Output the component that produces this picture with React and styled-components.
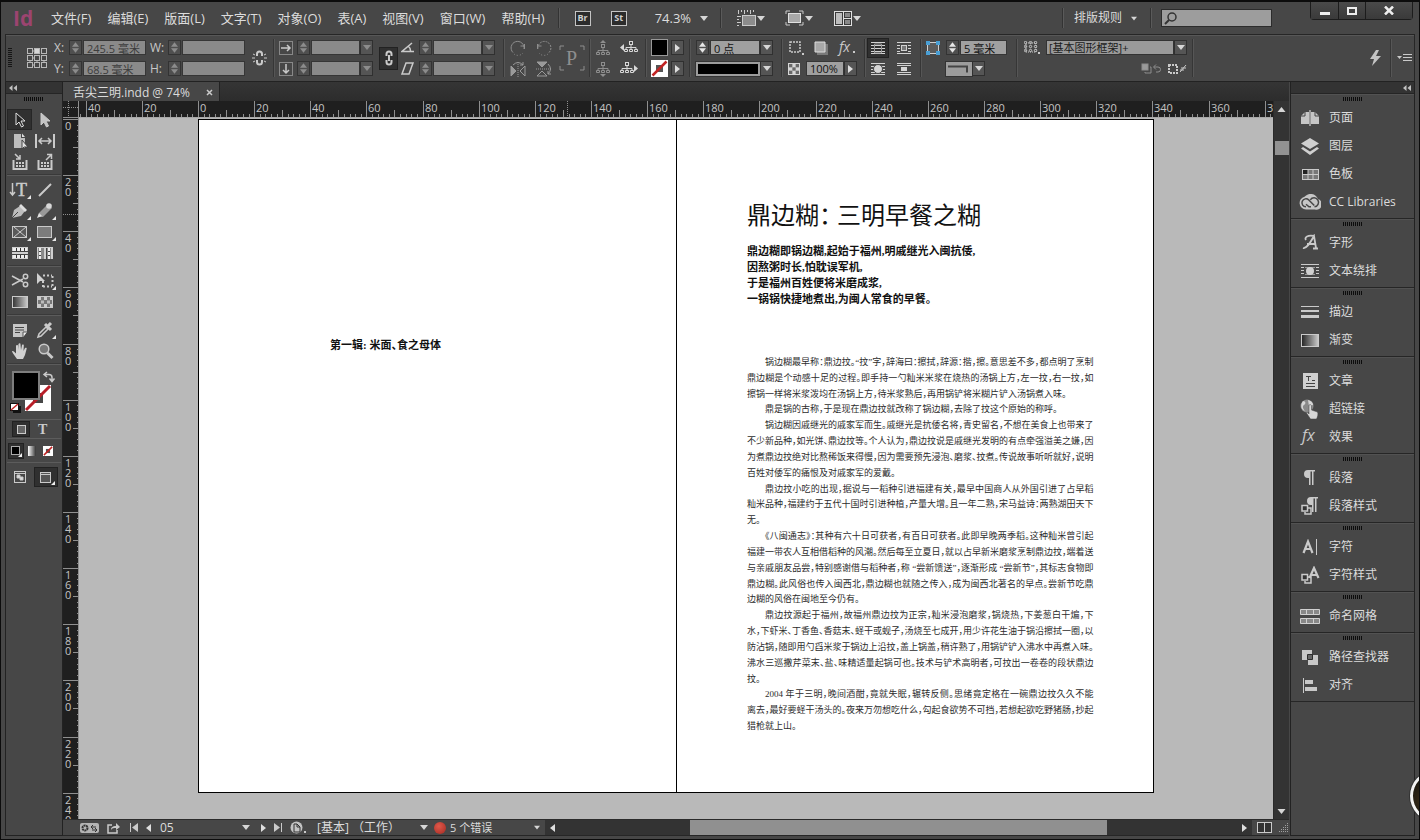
import React, { useState } from 'react'
import styled, { createGlobalStyle } from 'styled-components'

const GlobalStyle = createGlobalStyle`
  * {
    box-sizing: border-box;
  }
  body {
    margin: 0;
    background: #111;
  }
  button, input, select {
    font: inherit;
    color: inherit;
    margin: 0;
    padding: 0;
    border: 0;
    border-radius: 0;
    background: none;
    outline: none;
  }
  svg {
    display: block;
    flex: none;
  }
  h1, p {
    margin: 0;
  }
`;

/* ---------- window ---------- */

const Frame = styled.div`
  position: relative;
  display: flex;
  flex-direction: column;
  height: 100vh;
  overflow: hidden;
  padding: 0 4px 3px;
  background: #474747;
  border: 1px solid #0c0c0c;
  border-top-width: 2px;
  color: #dcdcdc;
  font-family: "Open Sans", "Noto Sans CJK SC", sans-serif;
  font-size: 12px;
  line-height: 16px;
`;

const MenuBar = styled.header`
  display: flex;
  align-items: center;
  height: 32px;
  flex: none;
  padding-left: 8px;
`;

const Logo = styled.div`
  width: 38px;
  color: #9c4470;
  font-size: 21px;
  font-weight: 700;
`;

const MenuList = styled.nav`
  display: flex;
  gap: 16px;
  font-size: 13px;
`;

const PlainButton = styled.button`
  display: flex;
  align-items: center;
  gap: ${(p) => p.$gap || 0}px;
  margin-left: ${(p) => p.$ml || 0}px;
  white-space: nowrap;
`;

const BarDivider = styled.span`
  width: 2px;
  height: 20px;
  margin-left: ${(p) => p.$ml || 0}px;
  border-left: 1px solid #333;
  border-right: 1px solid #5a5a5a;
`;

const AppBadge = styled.button`
  width: 16px;
  height: 15px;
  margin-left: ${(p) => p.$ml}px;
  border: 1px solid #c4c4c4;
  background: #2c2c2c;
  color: #cfcfcf;
  font-size: 9px;
  font-weight: 700;
  line-height: 12px;
`;

const Zoom = styled.button`
  display: flex;
  align-items: center;
  gap: 9px;
  margin-left: 28px;
  font-size: 13px;
`;

const Spacer = styled.div`
  flex: 1;
`;

const SearchBox = styled.label`
  display: flex;
  align-items: center;
  width: 111px;
  height: 18px;
  margin-left: 9px;
  padding-left: 2px;
  background: #9d9d9d;
  border: 1px solid #2c2c2c;

  input {
    width: 90px;
    color: #111;
  }
`;

const WindowButtons = styled.div`
  display: flex;
  align-self: flex-start;
  height: 18px;
  margin: 0 2px 0 38px;
  border: 1px solid #1c1c1c;
  border-top: 0;
  border-radius: 0 0 4px 4px;
`;

const WindowButton = styled.button`
  display: flex;
  align-items: center;
  justify-content: center;
  width: ${(p) => p.$w}px;
  background: linear-gradient(#4a4a4a, #3a3a3a);

  & + & {
    border-left: 1px solid #1c1c1c;
  }
`;

/* ---------- control bar ---------- */

const ControlBar = styled.section`
  display: flex;
  align-items: center;
  height: 48px;
  flex: none;
  border: 1px solid #262626;
  border-bottom-color: #222;
  box-shadow: inset 0 1px 0 #575757;
`;

const Cluster = styled.div`
  display: flex;
  flex-direction: column;
  gap: 6px;
  flex: none;
  margin-left: ${(p) => p.$ml}px;
`;

const Line2 = styled.div`
  display: flex;
  align-items: center;
  justify-content: ${(p) => p.$justify || 'flex-start'};
  gap: ${(p) => p.$gap || 0}px;
  height: 15px;
  padding-left: ${(p) => p.$indent || 0}px;
`;

const Single = styled.div`
  flex: none;
  margin-left: ${(p) => p.$ml}px;
`;

const Divider = styled.span`
  flex: none;
  width: 2px;
  height: 38px;
  margin-left: ${(p) => p.$ml}px;
  border-left: 1px solid #363636;
  border-right: 1px solid #565656;
`;

const FieldLabel = styled.label`
  width: ${(p) => p.$w}px;
  color: #c8c8c8;
`;

const SpinBox = styled.span`
  display: flex;
  flex-direction: column;
  width: 13px;
  height: 15px;
  margin-right: 1px;
  border: 1px solid #333;
  background: #4f4f4f;

  button {
    display: flex;
    align-items: center;
    justify-content: center;
    flex: 1;
  }
`;

const Field = styled.input`
  width: ${(p) => p.$w}px;
  height: 15px;
  padding-left: 3px;
  border: 1px solid #363636;
  background: ${(p) => (p.$on ? '#a0a0a0' : '#8a8a8a')};
  color: ${(p) => (p.$on ? '#111' : '#3c3c3c')};
  font-size: 11px;
  line-height: 13px;
`;

const DropButton = styled.button`
  display: flex;
  align-items: center;
  justify-content: center;
  width: 13px;
  height: 15px;
  border: 1px solid #303030;
  background: #555;
`;

const StrokeBox = styled.span`
  display: flex;
  align-items: center;
  justify-content: center;
  width: ${(p) => p.$w}px;
  height: 14px;
  border: 2px solid #9c9c9c;
  outline: 1px solid #333;
  background: ${(p) => p.$bg};
`;

const Pressable = styled.button`
  display: flex;
  align-items: center;
  justify-content: center;
  flex: none;
  width: ${(p) => p.$w}px;
  height: ${(p) => p.$h}px;
  border: 1px solid ${(p) => (p.$on ? '#222' : 'transparent')};
  background: ${(p) => (p.$on ? '#303030' : 'transparent')};
`;

const StyleSelect = styled.span`
  display: flex;
  height: 15px;

  select {
    appearance: none;
    width: 128px;
    padding-left: 2px;
    border: 1px solid #333;
    background: #9a9a9a;
    color: #1c1c1c;
    font-size: 11px;
    line-height: 13px;
  }
`;

/* ---------- work area ---------- */

const Body = styled.div`
  display: flex;
  flex: 1;
  min-height: 0;
`;

const Toolbox = styled.aside`
  width: 58px;
  flex: none;
  border: 1px solid #222;
  border-top: 0;
`;

const DockHeader = styled.div`
  display: flex;
  align-items: center;
  justify-content: ${(p) => p.$side};
  height: 12px;
  padding: 0 3px;
  background: #333;
  border-bottom: 1px solid #252525;
`;

const GripBar = styled.div`
  width: 20px;
  height: 4px;
  margin: 0 auto;
  background: repeating-linear-gradient(90deg, #0c0c0c 0 1px, #474747 1px 2px);
`;

const ToolGrip = styled.div`
  height: 12px;
  padding-top: 3px;
`;

const ToolGroup = styled.div`
  display: grid;
  grid-template-columns: 25px 25px;
  grid-auto-rows: 21px;
  padding: 3px 0;
  margin: 0 1px;
  border-bottom: 1px solid #5c5c5c;
  box-shadow: inset 0 -1px 0 #3a3a3a;
`;

const Tool = styled.button`
  display: flex;
  align-items: center;
  justify-content: center;
  border: 1px solid ${(p) => (p.$on ? '#262626' : 'transparent')};
  background: ${(p) => (p.$on ? '#303030' : 'transparent')};
`;

const Swatches = styled.div`
  height: 55px;
  padding: 6px 1px 0;
  margin: 0 1px;
  border-bottom: 1px solid #5c5c5c;
`;

const SmallRow = styled.div`
  display: flex;
  align-items: center;
  gap: ${(p) => p.$gap}px;
  height: ${(p) => p.$h}px;
  padding-left: ${(p) => p.$indent}px;
  margin: 0 1px;
  border-bottom: 1px solid ${(p) => (p.$last ? 'transparent' : '#5c5c5c')};
`;

const Main = styled.main`
  display: flex;
  flex-direction: column;
  flex: 1;
  min-width: 0;
`;

const TabStrip = styled.div`
  display: flex;
  height: 19px;
  flex: none;
  background: linear-gradient(#353535, #2c2c2c);
`;

const Tab = styled.div`
  display: flex;
  align-items: center;
  gap: 16px;
  height: 19px;
  padding: 2px 6px 0 10px;
  background: #474747;
  border-right: 1px solid #222;
`;

const TopRuler = styled.div`
  display: flex;
  height: 17px;
  flex: none;
  background: #1f1f1f;
`;

const RulerTrack = styled.div`
  display: flex;
  flex: 1;
  justify-content: center;
  overflow: hidden;
  border-bottom: 1px solid #a8a8a8;
`;

const RulerSvg = styled.svg`
  fill: #c4c4c4;
  font-size: 11px;
  line {
    stroke: #8f8f8f;
    shape-rendering: crispEdges;
  }
`;

const Stage = styled.div`
  display: flex;
  flex: 1;
  min-height: 0;
`;

const SideRuler = styled.div`
  width: 16px;
  flex: none;
  overflow: hidden;
  background: #1f1f1f;
`;

const Pasteboard = styled.div`
  display: flex;
  justify-content: center;
  align-items: flex-start;
  flex: 1;
  overflow: hidden;
  padding-top: 1px;
  background: #b9b9b9;
`;

const Spread = styled.article`
  display: grid;
  grid-template-columns: 478px 476px;
  height: 674px;
  border: 1px solid #000;
  background: #fff;
  color: #111;
  font-family: "Liberation Serif", "Noto Sans CJK SC", serif;
  font-feature-settings: "halt";
`;

const LeftPage = styled.section`
  padding: 217px 0 0 131px;
  border-right: 1px solid #000;
  font-size: 11px;
  font-weight: 700;
`;

const RightPage = styled.section`
  padding: 80px 61px 0 70px;
`;

const Title = styled.h1`
  font-size: 24px;
  font-weight: 400;
  line-height: 32px;
`;

const Lead = styled.div`
  margin-top: 11px;
  font-size: 11px;
  font-weight: 700;
  line-height: 16px;
`;

const Story = styled.div`
  display: grid;
  grid-auto-rows: 1fr;
  height: 380px;
  margin-top: 48px;
  color: #2c2c2c;
  font-size: 9px;
  line-height: 15px;
`;

const StoryLine = styled.p`
  white-space: nowrap;
  padding-left: ${(p) => (p.$indent ? 18 : 0)}px;
  text-align: justify;
  text-align-last: ${(p) => (p.$end ? 'left' : 'justify')};
`;

const VScroll = styled.div`
  display: flex;
  flex-direction: column;
  align-items: center;
  width: 16px;
  margin-top: -17px;
  padding: 6px 0 5px;
  background: #333;
  border-left: 1px solid #2a2a2a;
`;

const VThumb = styled.div`
  width: 14px;
  height: 14px;
  margin: 29px 0 auto;
  background: #929292;
`;

const StatusBar = styled.footer`
  display: flex;
  align-items: center;
  height: 17px;
  flex: none;
  border-top: 1px solid #2b2b2b;
  border-bottom: 1px solid #262626;
`;

const StatusItems = styled.div`
  display: flex;
  align-items: center;
  width: 482px;
  height: 15px;
  flex: none;
  padding-left: 17px;
`;

const StatusCell = styled.div`
  display: flex;
  align-items: center;
  justify-content: space-between;
  width: ${(p) => p.$w}px;
  margin-left: ${(p) => p.$ml}px;
  white-space: nowrap;
  font-size: ${(p) => (p.$small ? 11 : 12)}px;

  input {
    width: 50px;
  }
`;

const ErrorDot = styled.span`
  width: 12px;
  height: 12px;
  margin: 0 4px 0 6px;
  border-radius: 50%;
  background: radial-gradient(circle at 40% 35%, #e0584a, #a32a22);
`;

const HScroll = styled.div`
  display: flex;
  align-items: center;
  flex: 1;
  height: 15px;
  padding: 0 5px;
  background: #333;
`;

const HTrack = styled.div`
  display: grid;
  grid-template-columns: 20fr 62fr 20fr;
  flex: 1;
  height: 15px;
`;

const HThumb = styled.div`
  grid-column: 2;
  background: #909090;
`;

const StatusEnd = styled.div`
  display: flex;
  align-items: center;
  gap: 6px;
  padding: 0 1px 0 5px;
`;

/* ---------- panels ---------- */

const Dock = styled.aside`
  width: 125px;
  flex: none;
  margin-left: 1px;
  border: 1px solid #222;
  border-top: 0;
`;

const PanelGroup = styled.div`
  padding: 3px 0 2px;
  border-bottom: 1px solid #262626;
  box-shadow: inset 0 1px 0 #525252;
`;

const PanelButton = styled.button`
  display: flex;
  align-items: center;
  width: 100%;
  height: 28px;
  padding-left: 8px;
  gap: 8px;

  ${GripBar} + & {
    margin-top: 3px;
  }
`;

const PanelIcon = styled.span`
  display: flex;
  align-items: center;
  justify-content: center;
  width: 22px;
`;

const FloatBall = styled.div`
  position: absolute;
  right: -39px;
  bottom: 18px;
  width: 48px;
  height: 50px;
  border: 3px solid #f2f2f2;
  border-radius: 50%;
  background: radial-gradient(circle at 30% 60%, #3a2c18, #14140f 60%);
  box-shadow: 0 0 0 1px #333;
`;

/* ---------- drawings ---------- */

const C = '#cacaca';

const Icon = ({ w = 16, h = 16, children, ...rest }) => (
  <svg width={w} height={h} viewBox={`0 0 ${w} ${h}`} fill="none" stroke={C} aria-hidden="true" {...rest}>
    {children}
  </svg>
);

const Down = ({ w = 8, color = '#d6d6d6' }) => (
  <svg width={w} height={5} viewBox="0 0 8 5" aria-hidden="true"><path d="M0 0h8L4 5z" fill={color} /></svg>
);
const Up = ({ w = 8, color = '#d6d6d6' }) => (
  <svg width={w} height={5} viewBox="0 0 8 5" aria-hidden="true"><path d="M0 5h8L4 0z" fill={color} /></svg>
);
const Right = () => (
  <svg width={5} height={8} viewBox="0 0 5 8" aria-hidden="true"><path d="M0 0v8l5-4z" fill="#dedede" /></svg>
);
const Left = () => (
  <svg width={5} height={8} viewBox="0 0 5 8" aria-hidden="true"><path d="M5 0v8L0 4z" fill="#dedede" /></svg>
);
const Chevrons = () => (
  <svg width={8} height={6} viewBox="0 0 8 6" aria-hidden="true"><path d="M3.5 0v6L0 3zM8 0v6L4.5 3z" fill="#c0c0c0" /></svg>
);

const WindowLayoutIcon = () => (
  <Icon w={19} h={16}>
    <path d="M1.5 0v4M4.500 0v2M7.500 0v4M10.500 0v2M13.500 0v4M16.500 0v2M0 6.500h4M0 9.500h2M0 12.500h4M0 15.500h2" />
    <rect x="5.500" y="5.500" width="13" height="10" fill="#8c8c8c" />
  </Icon>
);
const ScreenModeIcon = () => (
  <Icon w={19} h={16}>
    <path d="M1 4V1h4M14 1h4v3M18 12v3h-4M5 15H1v-3" />
    <rect x="3.5" y="3.5" width="12" height="9" fill="#a8a8a8" stroke="#e0e0e0" />
  </Icon>
);
const ArrangeIcon = () => (
  <Icon w={18} h={15} stroke="#e0e0e0">
    <rect x=".5" y=".5" width="17" height="14" fill="#3a3a3a" />
    <rect x="2" y="2" width="6" height="11" fill="#bdbdbd" stroke="none" />
    <path d="M9.500 1v13M10 7.500h7" />
    <path d="M11 2h5v4h-5zM11 9h5v4h-5z" fill="#888" stroke="none" />
  </Icon>
);

const RefPointIcon = () => (
  <Icon w={20} h={21} stroke="#b8b8b8">
    <path d="M2 3h16M2 10h16M2 17h16M3 3v14M10 3v14M17 3v14" strokeDasharray="1 1" />
    {[0, 7, 14].map((y) => [0, 7, 14].map((x) => (
      <rect key={`${x}${y}`} x={x + .5} y={y + .5} width="5" height="5" fill={x === 7 && y === 0 ? '#d6d6d6' : '#474747'} />
    )))}
  </Icon>
);
const BrokenLinkIcon = () => (
  <Icon w={15} h={16}>
    <path d="M5 6V4a2.5 2.5 0 0 1 5 0v2M5 10v2a2.5 2.5 0 0 0 5 0v-2" strokeWidth="2" />
    <path d="M0 8h3M12 8h3M1 4l2 1M14 4l-2 1M1 12l2-1M14 12l-2-1" />
  </Icon>
);
const ScaleXIcon = () => (
  <Icon w={14} h={14}>
    <rect x=".5" y=".5" width="13" height="13" strokeDasharray="1 1" />
    <path d="M2 7h9M8 4l3 3-3 3" strokeWidth="1.5" />
  </Icon>
);
const ScaleYIcon = () => (
  <Icon w={14} h={14}>
    <rect x=".5" y=".5" width="13" height="13" strokeDasharray="1 1" />
    <path d="M7 2v9M4 8l3 3 3-3" strokeWidth="1.5" />
  </Icon>
);
const ChainIcon = () => (
  <Icon w={10} h={16}>
    <path d="M2.5 6V4a2.5 2.5 0 0 1 5 0v2M2.5 10v2a2.5 2.5 0 0 0 5 0v-2M5 5v6" strokeWidth="2" />
  </Icon>
);
const AngleIcon = () => <Icon w={14} h={11}><path d="M11 1L1 9.5h12M7 4a6 6 0 0 1 2.5 5" strokeWidth="1.5" /></Icon>;
const ShearIcon = () => <Icon w={14} h={13}><path d="M5 1h7L8 12H1z" strokeWidth="1.5" /></Icon>;

const RotateIcon = ({ flip }) => (
  <Icon stroke="#8e8e8e">
    <g transform={flip ? 'translate(16 0) scale(-1 1)' : undefined}>
      <path d="M3 12.5A6.5 6.5 0 1 1 14 9" strokeDasharray={flip ? '2 1' : undefined} />
      <path d="M14.5 9v-5M14.5 6h-4" />
      <path d="M4 14a6.5 6.5 0 0 0 9-1" strokeDasharray="1 2" />
    </g>
  </Icon>
);
const FlipIcon = ({ turn }) => (
  <Icon stroke="#9a9a9a">
    <g transform={turn ? 'rotate(90 8 8)' : undefined}>
      <path d="M8 1v15" strokeDasharray="1 1" />
      <path d="M1 5l5 5-5 5z" fill="#9a9a9a" />
      <path d="M15 5l-5 5 5 5z" />
      <path d="M3 4q5-5 10 0M13 1v3h-3" />
    </g>
  </Icon>
);
const BigPIcon = () => (
  <Icon w={26} h={26} stroke="#8e8e8e">
    <path d="M1 5V1h4M21 1h4v4M25 21v4h-4M5 25H1v-4" />
    <text x="7" y="20" fontSize="20" fontFamily="Liberation Serif" fill="#8e8e8e" stroke="none">P</text>
  </Icon>
);
const TreeIcon = ({ dir, bright }) => {
  const c = bright ? '#d8d8d8' : '#8e8e8e';
  const arrows = {
    up: 'M4 3h6L7 0z',
    down: 'M4 13h6l-3 3z',
    left: 'M4 4v7L0 7.5z',
    right: 'M14 4v7l4-3.5z',
  };
  const dx = dir === 'left' ? 4 : 0;
  const dy = dir === 'up' ? 3 : 0;
  return (
    <Icon w={bright ? 18 : 14} h={16} stroke={c}>
      <path d={arrows[dir]} fill={c} stroke="none" />
      <g transform={`translate(${dx} ${dy})`}>
        <rect x="5.5" y="1.5" width="3" height="3" />
        <path d="M7 5v4M2 9V7.5h10V9" />
        <path d="M.5 9.5h3v2h-3zM5.5 9.5h3v2h-3zM10.5 9.5h3v2h-3z" />
      </g>
    </Icon>
  );
};
const NoneSwatch = ({ s = 17 }) => (
  <svg width={s} height={s} viewBox="0 0 17 17" aria-hidden="true">
    <rect width="17" height="17" fill="#fff" />
    <rect x="5" y="5" width="7" height="7" fill="#555" />
    <path d="M1.5 15.5l14-14" stroke="#c22424" strokeWidth="2.5" />
  </svg>
);
const BlackSwatch = () => (
  <svg width={17} height={17} aria-hidden="true"><rect x=".5" y=".5" width="16" height="16" fill="#000" stroke="#999" /></svg>
);
const DashedBoxIcon = () => (
  <Icon><rect x="2" y="2" width="10" height="10" strokeDasharray="2 1" strokeWidth="1.5" /><path d="M14 13h2v2h-2z" fill={C} stroke="none" /></Icon>
);
const ShadowIcon = () => (
  <Icon w={14} h={14} stroke="none"><path d="M3 3h11v11H3z" fill="#7a7a7a" /><path d="M1 1h10v10H1z" fill="#a8a8a8" stroke="#ddd" /></Icon>
);
const FxIcon = ({ size = 14, dot }) => (
  <Icon w={20} h={24}>
    <text x="2" y="16" fontSize={size} fontStyle="italic" fill={C} stroke="none">fx</text>
    {dot && <path d="M16 15h2v2h-2z" fill={C} stroke="none" />}
  </Icon>
);
const CheckerIcon = ({ w = 12, h = 12 }) => (
  <Icon w={w} h={h} stroke="none">
    <rect width={w} height={h} fill="#d6d6d6" />
    {[0, 1, 2].map((r) => [0, 1, 2].map((c) => ((r + c) % 2 === 0 ? <rect key={`${r}${c}`} x={1 + c * (w - 2) / 3} y={1 + r * (h - 2) / 3} width={(w - 2) / 3} height={(h - 2) / 3} fill="#6a6a6a" /> : null)))}
  </Icon>
);
const WrapIcon = ({ kind }) => (
  <Icon w={16} h={14} stroke="#d2d2d2">
    <path d="M1 1.5h14M1 12.5h14" />
    <path d={kind === 'jump' ? 'M1 3.5h14M1 10.5h14' : 'M1 4.5h14M1 7.500h14M1 10.500h14'} />
    {kind === 'box' && <rect x="4.5" y="3.5" width="7" height="7" fill="#8c8c8c" stroke="#474747" />}
    {kind === 'box' && <rect x="5.5" y="4.5" width="5" height="5" fill="#777" />}
    {kind === 'shape' && <circle cx="8" cy="7" r="4.5" fill="#d6d6d6" stroke="#474747" />}
    {kind === 'jump' && <rect x="5" y="5" width="6" height="4" fill="#d6d6d6" stroke="none" />}
    {kind === 'none' && <path d="M4.500 3v9h7V3z" stroke="#999" />}
  </Icon>
);
const CornerIcon = () => (
  <Icon w={16} h={16}>
    <rect x="2.500" y="2.500" width="11" height="11" fill="#5c5c5c" stroke="#d0d0d0" />
    <path d="M1 1h4v4H1zM11 1h4v4h-4zM1 11h4v4H1zM11 11h4v4h-4z" fill="#4a9fd4" stroke="none" />
  </Icon>
);
const FrameStyleIcon = () => (
  <Icon w={16} h={14}>
    <path d="M2 2h10v9H2z" strokeDasharray="1 1" />
    {[1, 5, 9].map((y) => [1, 6, 11].map((x) => <circle key={`${x}${y}`} cx={x + .5} cy={y + .5} r="1.2" />))}
    <path d="M14 11h2v2h-2z" fill={C} stroke="none" />
  </Icon>
);
const ClearIcon = () => (
  <Icon w={21} h={12} stroke="#8e8e8e">
    <rect x="1" y="1" width="6" height="6" fill="#9a9a9a" />
    <path d="M9 4h1v6H4V9M13 4h4a2.5 2.5 0 0 1 0 5h-2M15 1.5L12.5 4 15 6.5" />
  </Icon>
);
const RedefineIcon = () => (
  <Icon w={19} h={12}>
    <rect x="1" y="2" width="8" height="8" strokeDasharray="2 1" strokeWidth="2" />
    <path d="M12 9l6-7M13 5h5M12 7h4" />
  </Icon>
);
const BoltIcon = () => <Icon w={11} h={16} stroke="none"><path d="M6 0L0 9h4L2 16l9-10H6l3-6z" fill="#c4c4c4" /></Icon>;
const FlyoutIcon = () => (
  <Icon w={15} h={9}><path d="M0 2h5L2.5 5z" fill={C} stroke="none" /><path d="M6 .5h9M6 3.5h9M6 6.5h9" /></Icon>
);

/* toolbox icons sit on a 22x18 plate, the corner mark shows hidden tools */
const Plate = ({ more, children }) => (
  <Icon w={22} h={18}>
    {children}
    {more && <path d="M22 14v4h-4z" fill="#e8e8e8" stroke="none" />}
  </Icon>
);

const toolGroups = [
  [
    ['选择工具', <Plate><path d="M7 2v12l3-3 2.5 5 2-1-2.5-5h4z" fill="#262626" stroke="#e0e0e0" /></Plate>],
    ['直接选择工具', <Plate><path d="M7 2v12l3-3 2.5 5 2-1-2.5-5h4z" fill="#c4c4c4" /></Plate>],
    ['页面工具', <Plate><path d="M5 2h7v4h4v10H5z" fill="#bdbdbd" stroke="none" /><path d="M13 1.5V5h3z" fill="#e0e0e0" stroke="none" /><path d="M13 8v9l2-2h4z" fill="#e0e0e0" stroke="#444" /></Plate>],
    ['间隙工具', <Plate><path d="M2 2v14M20 2v14" strokeWidth="2" /><path d="M5 9h12M8 6L5 9l3 3M14 6l3 3-3 3" strokeWidth="1.5" /></Plate>],
    ['内容收集器', <Plate><path d="M4.5 7v9h13V7" strokeWidth="2" /><path d="M7 10h8M7 13h8" strokeWidth="2" strokeDasharray="2 1" /><path d="M6 1l5 5M11 2v4H7" strokeWidth="1.5" /></Plate>],
    ['内容置入器', <Plate><path d="M4.5 7v9h13V7" strokeWidth="2" /><path d="M7 10h8M7 13h8" strokeWidth="2" strokeDasharray="2 1" /><path d="M12 7l5-5M13 1.5h4.5V6" strokeWidth="1.5" /></Plate>],
  ],
  [
    ['直排文字工具', <Plate more><path d="M3.5 2v12M1 11l2.5 3L6 11" strokeWidth="1.5" /><text x="7" y="15" fontSize="18" fontFamily="Liberation Serif" fill={C} stroke={C} strokeWidth=".5">T</text></Plate>],
    ['直线工具', <Plate><path d="M5 15L17 3" strokeWidth="2" /></Plate>],
    ['钢笔工具', <Plate more><path d="M3 16l2-8 6-4 5 5-4 5z" fill="#bdbdbd" stroke="none" /><path d="M12 2l6 6-2 2-6-6z" fill="#dedede" stroke="none" /><path d="M3 16l6-6" stroke="#444" /></Plate>],
    ['铅笔工具', <Plate more><path d="M4 15l1-4 9-9 4 4-9 9z" fill="#999" stroke="none" /><path d="M3 16l2-5 3 3z" fill="#e0e0e0" stroke="none" /><circle cx="15" cy="4" r="2.8" fill="#d8d8d8" stroke="none" /></Plate>],
    ['矩形框架工具', <Plate more><rect x="3.500" y="3.500" width="14" height="11" fill="#5a5a5a" /><path d="M5 4l12 10M17 4L5 14" /></Plate>],
    ['矩形工具', <Plate more><rect x="3.500" y="3.500" width="14" height="11" fill="#7c7c7c" /></Plate>],
    ['水平网格工具', <Plate><rect x="3" y="3" width="16" height="12" fill="#d0d0d0" stroke="none" /><path d="M4 5.5h14M4 12.5h14" stroke="#333" strokeWidth="3" /><path d="M4 5.5h14M4 12.5h14" stroke="#eee" strokeWidth="3" strokeDasharray="3 1" /><path d="M3 7.5h16M3 10.5h16" stroke="#444" /></Plate>],
    ['垂直网格工具', <Plate><rect x="3" y="3" width="16" height="12" fill="#d0d0d0" stroke="none" /><path d="M6 4v11M15 4v11" stroke="#444" strokeWidth="3" /><path d="M6 4v11M15 4v11" stroke="#eee" strokeWidth="2" strokeDasharray="3 1" /><path d="M9 4v11M12.5 4v11" stroke="#444" /></Plate>],
  ],
  [
    ['剪刀工具', <Plate><path d="M3 4l11 6M3 13l11-6" strokeWidth="1.5" /><circle cx="16.5" cy="4.5" r="2.2" strokeWidth="1.5" /><circle cx="16.5" cy="12.5" r="2.2" strokeWidth="1.5" /></Plate>],
    ['自由变换工具', <Plate more><path d="M9 3.5h9M9 14.5h9M18.5 4v10M9 9v6" strokeDasharray="2 2" strokeWidth="2" /><path d="M3 1v11l3-3h5z" fill="#d0d0d0" stroke="none" /></Plate>],
    ['渐变色板工具', <Plate><defs><linearGradient id="tg"><stop stopColor="#333" /><stop offset="1" stopColor="#ccc" /></linearGradient></defs><rect x="3.5" y="3.5" width="15" height="11" fill="url(#tg)" /></Plate>],
    ['渐变羽化工具', <Plate><rect x="3.5" y="3.5" width="15" height="11" fill="#777" /><path d="M4 5.5h14M4 12.5h14" stroke="#ccc" strokeWidth="3" strokeDasharray="3 3" /><path d="M7 9h12" stroke="#bbb" strokeWidth="3" strokeDasharray="3 3" /></Plate>],
  ],
  [
    ['附注工具', <Plate><path d="M4 3h14v8l-4 5H4z" fill="#c6c6c6" stroke="none" /><path d="M6 6.5h9M6 9h9M6 11.5h5" stroke="#444" /><path d="M14 16v-5h4" fill="#eee" stroke="#555" /></Plate>],
    ['吸管工具', <Plate more><path d="M4 16l1-3 7-7 2 2-7 7z" strokeWidth="1.5" /><path d="M11 3l6 6M14 5l3-3" strokeWidth="3" /></Plate>],
    ['抓手工具', <Plate><path d="M8 17C6 14 4 12 3 9.5c1-1 2 0 4 2V3.5c1-1 2-.5 2 .5V8l.5-6c1-1.2 2-.5 2 .3L12 8l1-5c1-1 2-.3 1.8.7L14.5 9l1.5-3c1.2-.7 2 0 1.6 1L16 13l-2 4z" fill="#d0d0d0" stroke="none" /></Plate>],
    ['缩放工具', <Plate><circle cx="10" cy="7" r="4.8" fill="#777" strokeWidth="1.5" /><path d="M13.5 11l5 5" strokeWidth="3" /></Plate>],
  ],
];

const SwatchDrawing = () => (
  <Icon w={50} h={44} stroke="none">
    <rect x="17" y="14" width="26" height="26" fill="#fff" />
    <rect x="25" y="22" width="10" height="10" fill="#474747" />
    <path d="M18 39L42 15" stroke="#b81e28" strokeWidth="3" />
    <rect x="5" y="1" width="26" height="27" fill="#000" stroke="#7e7e7e" strokeWidth="2" />
    <path d="M37 3.5h4a3 3 0 0 1 3 3V9M39 1l-3 2.5L39 6M41.5 7.5l2.5 3 2.5-3" stroke={C} strokeWidth="1.5" />
    <rect x="6" y="36" width="6" height="5" fill="none" stroke="#111" strokeWidth="2" />
    <rect x="2.5" y="32.5" width="8" height="7" fill="#fff" stroke="#111" />
    <path d="M3 39l7-6" stroke="#c22424" strokeWidth="1.5" />
  </Icon>
);

const LayerIcon = () => (
  <Icon w={18} h={17} stroke="none">
    <path d="M9 0l9 5.5L9 11 0 5.5z" fill="#d0d0d0" /><path d="M2 9l7 4.5L16 9l2 1.5L9 17 0 10.5z" fill="#d0d0d0" />
  </Icon>
);
const PagesIcon = () => (
  <Icon w={18} h={16} stroke="none">
    <path d="M0 6l4-4h4v12H0zM18 6l-4-4h-4v12h8z" fill="#c6c6c6" /><path d="M0 6h4V2M18 6h-4V2" stroke="#444" /><path d="M9 0v16" stroke="#eee" />
  </Icon>
);
const SwatchPanelIcon = () => (
  <Icon w={17} h={13}>
    <rect x=".5" y="1.500" width="16" height="10" fill="#777" />
    <rect x="1" y="2" width="5" height="4" fill="#222" stroke="none" />
    <path d="M6 1v11M11 1v11M1 6.5h15" />
  </Icon>
);
const CcIcon = () => (
  <Icon w={22} h={16}>
    <path d="M7 15.500a6.500 6.500 0 0 1-1.500-12.800A8 8 0 0 1 19 5a5.400 5.400 0 0 1-3 10.500z" fill="#c6c6c6" stroke="none" />
    <path d="M7 12.800a4 4 0 1 1 2.800-6.800l5.500 5.500" stroke="#474747" strokeWidth="1.500" />
    <path d="M15.500 12.800a4.500 4.500 0 1 0-4.200-7M7 10.200l3 2.600h2" stroke="#474747" strokeWidth="1.500" />
  </Icon>
);
const GlyphIcon = () => (
  <Icon w={18} h={18}><path d="M2 14c3 1 6-3 11-12l2 12M6 10h8M5 6C3 3 7 1 13 2M12 14.5h5" strokeWidth="1.8" /></Icon>
);
const WrapPanelIcon = () => (
  <Icon w={18} h={16}>
    <path d="M0 1.5h18M0 14.5h18M0 4.5h3M15 4.5h3M0 7.5h3M15 7.5h3M0 10.5h3M15 10.5h3" />
    <path d="M4 4.5h10M4 11.5h10" stroke="#999" /><circle cx="9" cy="8" r="4" fill="#d0d0d0" stroke="none" />
  </Icon>
);
const StrokeIcon = () => <Icon w={18} h={14}><path d="M0 1.5h18" /><path d="M0 6h18" strokeWidth="2" /><path d="M0 11.500h18" strokeWidth="3" /></Icon>;
const GradientIcon = () => (
  <Icon w={18} h={13}>
    <defs><linearGradient id="pg"><stop stopColor="#222" /><stop offset="1" stopColor="#ccc" /></linearGradient></defs>
    <rect x=".5" y=".5" width="17" height="12" fill="url(#pg)" />
  </Icon>
);
const ArticleIcon = () => (
  <Icon w={16} h={18} stroke="#444">
    <path d="M1 1h15v16H1z" fill="#d0d0d0" stroke="none" /><path d="M4 4.5h5M6.5 4v5M10 8.5h3M4 11.5h9M4 14.5h9" />
  </Icon>
);
const LinkIcon = () => (
  <Icon w={20} h={20} stroke="none">
    <circle cx="7" cy="7" r="6.5" fill="#8a8a8a" /><path d="M3 2c3 0 3 3 1 4s-1 4 1 6C1 11 0 6 3 2zM8 1c4 1 5 3 5 5l-4 1z" fill="#d6d6d6" />
    <path d="M9 6c1.5-1 2.5 0 2.5 1v4l6 2c1 2 0 5-1 7h-6l-4-6c1-1 2 0 2.5 1z" fill="#d6d6d6" stroke="#444" strokeWidth=".5" />
  </Icon>
);
const ParaShape = ({ x = 0, y = 0 }) => (
  <g transform={`translate(${x} ${y})`} stroke="none" fill={C}><path d="M8 0H5a4 4 0 0 0 0 8h1v7h1.5V1.5H9V15h1.5V1.5H12V0z" /></g>
);
const ParaIcon = () => <Icon w={14} h={16}><ParaShape /></Icon>;
const StyleSquares = ({ y }) => (
  <g transform={`translate(0 ${y})`}><path d="M7 3h3v6H4V7" strokeWidth="1.5" /><rect x="1" y=".5" width="5.5" height="5.5" strokeWidth="1.5" fill="#333" /></g>
);
const ParaStyleIcon = () => <Icon w={18} h={18}><ParaShape x={5} /><StyleSquares y={8} /></Icon>;
const CharIcon = () => (
  <Icon w={16} h={16}><path d="M1.5 14L6 2.5 10.5 14M3 10h6" strokeWidth="2.2" /><path d="M14.5 0v16" /></Icon>
);
const CharStyleIcon = () => <Icon w={19} h={18}><path d="M8.5 12L13 2l4.5 10M10 9h6" strokeWidth="2.2" /><StyleSquares y={8} /></Icon>;
const GridIcon = () => (
  <Icon w={20} h={17} stroke="#d0d0d0"><path d="M.5 1.500h19v5H.5zM6.500 1v6M13.500 1v6M.5 10.500h19v5H.5zM6.500 10v6M13.500 10v6" fill="#888" /></Icon>
);
const PathfinderIcon = () => (
  <Icon w={17} h={17} stroke="none">
    <path d="M0 1h10v10H0z" fill="#c8c8c8" /><path d="M6 6h10v10H6z" fill="#c8c8c8" /><path d="M5.5 5.5h5v5h-5z" fill="#666" stroke="#2c2c2c" />
  </Icon>
);
const AlignIcon = () => (
  <Icon w={15} h={15} stroke="none"><path d="M.5 0v15" stroke={C} /><path d="M2 2h8v4H2zM2 9h12v4H2z" fill="#c8c8c8" /></Icon>
);

/* ---------- data ---------- */

const menus = ['文件(F)', '编辑(E)', '版面(L)', '文字(T)', '对象(O)', '表(A)', '视图(V)', '窗口(W)', '帮助(H)'];

const panels = [
  [['页面', <PagesIcon />], ['图层', <LayerIcon />], ['色板', <SwatchPanelIcon />], ['CC Libraries', <CcIcon />]],
  [['字形', <GlyphIcon />], ['文本绕排', <WrapPanelIcon />]],
  [['描边', <StrokeIcon />], ['渐变', <GradientIcon />]],
  [['文章', <ArticleIcon />], ['超链接', <LinkIcon />], ['效果', <FxIcon size={16} />]],
  [['段落', <ParaIcon />], ['段落样式', <ParaStyleIcon />]],
  [['字符', <CharIcon />], ['字符样式', <CharStyleIcon />]],
  [['命名网格', <GridIcon />]],
  [['路径查找器', <PathfinderIcon />], ['对齐', <AlignIcon />]],
];

const lead = [
  '鼎边糊即锅边糊,起始于福州,明戚继光入闽抗倭,',
  '因熬粥时长,怕耽误军机,',
  '于是福州百姓便将米磨成浆,',
  '一锅锅快捷地煮出,为闽人常食的早餐。',
];

const story = [
  ['锅边糊最早称：鼎边抆。“抆”字，辞海曰：擦拭，辞源：揩，擦。意思差不多，都点明了烹制',
    '鼎边糊是个动感十足的过程。即手持一勺籼米米浆在烧热的汤锅上方，左一抆，右一抆，如',
    '擦锅一样将米浆泼均在汤锅上方，待米浆熟后，再用锅铲将米糊片铲入汤锅煮入味。'],
  ['鼎是锅的古称，于是现在鼎边抆就改称了锅边糊，去除了抆这个原始的称呼。'],
  ['锅边糊因戚继光的戚家军而生。戚继光是抗倭名将，青史留名，不想在美食上也带来了',
    '不少新品种，如光饼、鼎边抆等。个人认为，鼎边抆说是戚继光发明的有点牵强溢美之嫌，因',
    '为煮鼎边抆绝对比熬稀饭来得慢，因为需要预先浸泡、磨浆、抆煮。传说故事听听就好，说明',
    '百姓对倭军的痛恨及对戚家军的爱戴。'],
  ['鼎边抆小吃的出现，据说与一稻种引进福建有关，最早中国商人从外国引进了占早稻',
    '籼米品种，福建约于五代十国时引进种植，产量大增。且一年二熟，宋马益诗：两熟湖田天下',
    '无。'],
  ['《八闽通志》：其种有六十日可获者，有百日可获者。此即早晚两季稻。这种籼米曾引起',
    '福建一带农人互相借稻种的风潮。然后每至立夏日，就以占早新米磨浆烹制鼎边抆，端着送',
    '与亲戚朋友品尝，特别感谢借与稻种者，称 “尝新馈送”，逐渐形成 “尝新节”，其标志食物即',
    '鼎边糊。此风俗也传入闽西北，鼎边糊也就随之传入，成为闽西北著名的早点。尝新节吃鼎',
    '边糊的风俗在闽地至今仍有。'],
  ['鼎边抆源起于福州，故福州鼎边抆为正宗，籼米浸泡磨浆，锅烧热，下姜葱白干煸，下',
    '水，下虾米、丁香鱼、香菇末、蛏干或蚬子，汤烧至七成开，用少许花生油于锅沿擦拭一圈，以',
    '防沾锅，随即用勺舀米浆于锅边上沿抆，盖上锅盖，稍许熟了，用锅铲铲入沸水中再煮入味。',
    '沸水三巡撒芹菜末、盐、味精适量起锅可也。技术与铲术高明者，可抆出一卷卷的段状鼎边',
    '抆。'],
  ['2004 年于三明，晚间酒酣，竟就失眠，辗转反侧。思绪竟定格在一碗鼎边抆久久不能',
    '离去，最好要蛏干汤头的。夜来万勿想吃什么，勾起食欲势不可挡，若想起欲吃野猪肠，抄起',
    '猎枪就上山。'],
];

/* ---------- parts ---------- */

const MM = 2.807; // screen pixels per millimetre at 74%

const ticks = (from, to) => {
  const list = [];
  for (let v = from; v <= to; v += 2) list.push(v);
  return list;
};

const HorizontalRuler = () => (
  <RulerSvg width={1194} height={16} aria-label="水平标尺">
    {ticks(-42, 382).map((v) => {
      const x = Math.round(119 + v * MM);
      const top = v % 20 === 0 ? 0 : v % 10 === 0 ? 9 : 13;
      return (
        <g key={v}>
          <line x1={x + .5} x2={x + .5} y1={top} y2={16} />
          {v % 20 === 0 && <text x={x + 2} y={11}>{Math.abs(v)}</text>}
        </g>
      );
    })}
    <line x1={488.5} x2={488.5} y1={0} y2={16} strokeDasharray="1 1" />
  </RulerSvg>
);

const VerticalRuler = () => (
  <RulerSvg width={16} height={760} aria-label="垂直标尺">
    {ticks(0, 260).map((v) => {
      const y = Math.round(1 + v * MM);
      const left = v % 20 === 0 ? 0 : v % 10 === 0 ? 10 : 14;
      return (
        <g key={v}>
          <line y1={y + .5} y2={y + .5} x1={left} x2={16} />
          {v % 20 === 0 && String(v).split('').map((d, i) => (
            <text key={i} x={2} y={y + 11 + i * 10}>{d}</text>
          ))}
        </g>
      );
    })}
    <line y1={96.5} y2={96.5} x1={0} x2={16} strokeDasharray="1 1" />
    <line x1={15.5} x2={15.5} y1={0} y2={760} />
  </RulerSvg>
);

const Spin = ({ label, on }) => {
  const color = on ? '#e6e6e6' : '#8c8c8c';
  return (
    <SpinBox>
      <button aria-label={`${label} 增加`}><Up w={7} color={color} /></button>
      <button aria-label={`${label} 减少`}><Down w={7} color={color} /></button>
    </SpinBox>
  );
};

const Coord = ({ id, name, value, w }) => (
  <Line2>
    <FieldLabel htmlFor={id} $w={w}>{name}:</FieldLabel>
    <Spin label={name} />
    <Field id={id} $w={63} defaultValue={value} />
  </Line2>
);

const Combo = ({ icon, label }) => (
  <Line2 $gap={4}>
    {icon}
    <Line2>
      <Spin label={label} />
      <Field aria-label={label} $w={49} />
      <DropButton aria-label={`${label} 列表`}><Down color="#8c8c8c" /></DropButton>
    </Line2>
  </Line2>
);

const Controls = () => (
  <ControlBar>
    <Single $ml={2}><Icon w={4} h={20} stroke="#161616"><path d="M2 0v20" strokeWidth="4" strokeDasharray="1 1" /></Icon></Single>
    <Single $ml={15}><RefPointIcon /></Single>
    <Cluster $ml={7}>
      <Coord id="x" name="X" value="245.5 毫米" w={15} />
      <Coord id="y" name="Y" value="68.5 毫米" w={15} />
    </Cluster>
    <Cluster $ml={4}>
      <Coord id="w" name="W" w={18} />
      <Coord id="h" name="H" w={18} />
    </Cluster>
    <Single $ml={7}><BrokenLinkIcon /></Single>
    <Divider $ml={6} />
    <Cluster $ml={4}>
      <Combo label="X 缩放" icon={<ScaleXIcon />} />
      <Combo label="Y 缩放" icon={<ScaleYIcon />} />
    </Cluster>
    <Single $ml={6}><Pressable $w={19} $h={23} $on aria-label="约束缩放比例"><ChainIcon /></Pressable></Single>
    <Cluster $ml={3}>
      <Combo label="旋转" icon={<AngleIcon />} />
      <Combo label="切变" icon={<ShearIcon />} />
    </Cluster>
    <Divider $ml={8} />
    <Cluster $ml={5}>
      <Line2 $gap={10}><RotateIcon /><RotateIcon flip /></Line2>
      <Line2 $gap={10}><FlipIcon /><FlipIcon turn /></Line2>
    </Cluster>
    <Single $ml={7}><BigPIcon /></Single>
    <Divider $ml={4} />
    <Cluster $ml={5}>
      <Line2 $gap={10}><TreeIcon dir="up" /><TreeIcon dir="left" bright /></Line2>
      <Line2 $gap={10}><TreeIcon dir="down" /><TreeIcon dir="right" bright /></Line2>
    </Cluster>
    <Divider $ml={7} />
    <Cluster $ml={4}>
      <Line2 $gap={3}><BlackSwatch /><DropButton aria-label="填色"><Right /></DropButton></Line2>
      <Line2 $gap={3}><NoneSwatch /><DropButton aria-label="描边"><Right /></DropButton></Line2>
    </Cluster>
    <Divider $ml={5} />
    <Cluster $ml={5}>
      <Line2>
        <Spin label="描边粗细" on />
        <Field $on $w={50} aria-label="描边粗细" defaultValue="0 点" />
        <DropButton aria-label="描边粗细列表"><Down /></DropButton>
      </Line2>
      <Line2><StrokeBox $w={64} $bg="#000" /><DropButton aria-label="描边类型"><Down /></DropButton></Line2>
    </Cluster>
    <Divider $ml={8} />
    <Cluster $ml={5}>
      <Line2 $justify="space-between"><DashedBoxIcon /><ShadowIcon /><FxIcon dot /></Line2>
      <Line2>
        <CheckerIcon />
        <Line2 $indent={6}>
          <Field $on $w={38} aria-label="不透明度" defaultValue="100%" />
          <DropButton aria-label="不透明度滑块"><Right /></DropButton>
        </Line2>
      </Line2>
    </Cluster>
    <Divider $ml={7} />
    <Cluster $ml={1}>
      <Line2 $gap={4}>
        <Pressable $w={22} $h={20} $on aria-label="无文本绕排"><WrapIcon kind="none" /></Pressable>
        <Pressable $w={22} $h={20} aria-label="沿定界框绕排"><WrapIcon kind="box" /></Pressable>
      </Line2>
      <Line2 $gap={4}>
        <Pressable $w={22} $h={20} aria-label="沿对象形状绕排"><WrapIcon kind="shape" /></Pressable>
        <Pressable $w={22} $h={20} aria-label="上下型绕排"><WrapIcon kind="jump" /></Pressable>
      </Line2>
    </Cluster>
    <Divider $ml={5} />
    <Cluster $ml={3}>
      <Line2 $gap={5}>
        <CornerIcon />
        <Line2>
          <Spin label="转角大小" on />
          <Field $on $w={47} aria-label="转角大小" defaultValue="5 毫米" />
        </Line2>
      </Line2>
      <Line2 $indent={21}>
        <StrokeBox $w={26} $bg="#9c9c9c"><Icon w={22} h={8} stroke="#444"><path d="M0 1.5h19v6" strokeWidth="2" /></Icon></StrokeBox>
        <DropButton aria-label="转角形状"><Down /></DropButton>
      </Line2>
    </Cluster>
    <Divider $ml={9} />
    <Cluster $ml={6}>
      <Line2 $gap={6}>
        <FrameStyleIcon />
        <StyleSelect>
          <select aria-label="对象样式"><option>[基本图形框架]+</option></select>
          <DropButton aria-label="对象样式列表"><Down /></DropButton>
        </StyleSelect>
      </Line2>
      <Line2 $gap={6} $justify="flex-end"><ClearIcon /><RedefineIcon /></Line2>
    </Cluster>
    <Divider $ml={5} />
    <Spacer />
    <BoltIcon />
    <Divider $ml={9} />
    <PlainButton $ml={5} aria-label="控制面板菜单"><FlyoutIcon /></PlainButton>
    <Single $ml={2} />
  </ControlBar>
);

const Tools = () => {
  const [active, setActive] = useState('选择工具');
  return (
    <Toolbox>
      <DockHeader $side="flex-start"><Chevrons /></DockHeader>
      <ToolGrip><GripBar /></ToolGrip>
      {toolGroups.map((group, i) => (
        <ToolGroup key={i}>
          {group.map(([name, icon]) => (
            <Tool key={name} aria-label={name} $on={active === name} onClick={() => setActive(name)}>{icon}</Tool>
          ))}
        </ToolGroup>
      ))}
      <Swatches><SwatchDrawing /></Swatches>
      <SmallRow $h={19} $gap={4} $indent={5}>
        <Pressable $w={18} $h={16} $on aria-label="格式针对容器"><Icon w={11} h={11}><rect x="1.5" y="1.5" width="8" height="8" fill="#666" /></Icon></Pressable>
        <Pressable $w={18} $h={16} aria-label="格式针对文本">
          <Icon w={12} h={14}><text x="1" y="12" fontSize="14" fontWeight="700" fontFamily="Liberation Serif" fill={C} stroke="none">T</text></Icon>
        </Pressable>
      </SmallRow>
      <SmallRow $h={24} $gap={0} $indent={1}>
        <Pressable $w={16} $h={16} $on aria-label="应用颜色"><Icon w={12} h={12}><rect x="1.500" y="1.500" width="8" height="8" fill="#000" stroke="#aaa" /><path d="M12 8v4H8z" fill="#eee" stroke="none" /></Icon></Pressable>
        <Pressable $w={16} $h={16} aria-label="应用渐变">
          <Icon w={8} h={10} stroke="none"><defs><linearGradient id="ag"><stop stopColor="#fff" /><stop offset="1" stopColor="#333" /></linearGradient></defs><rect width="8" height="10" fill="url(#ag)" /></Icon>
        </Pressable>
        <Pressable $w={16} $h={16} aria-label="应用无"><NoneSwatch s={10} /></Pressable>
      </SmallRow>
      <SmallRow $h={28} $gap={2} $indent={1} $last>
        <Pressable $w={24} $h={20} aria-label="视图选项"><Icon w={12} h={12}><rect x=".5" y=".5" width="11" height="11" /><path d="M1 2.500h10" /><path d="M3 4h3v2h3v3H6V7H3z" fill="#ddd" /></Icon></Pressable>
        <Pressable $w={24} $h={20} $on aria-label="屏幕模式"><Icon w={18} h={16}><rect x="3.500" y="3.500" width="10" height="10" fill="#555" /><path d="M4 5.500h9" /><path d="M18 12v4h-4z" fill="#eee" stroke="none" /></Icon></Pressable>
      </SmallRow>
    </Toolbox>
  );
};

const Document = () => (
  <Spread>
    <LeftPage><p>第一辑: 米面、食之母体</p></LeftPage>
    <RightPage>
      <Title>鼎边糊： 三明早餐之糊</Title>
      <Lead>{lead.map((line) => <p key={line}>{line}</p>)}</Lead>
      <Story>
        {story.map((para) => para.map((line, i) => (
          <StoryLine key={line} $indent={i === 0} $end={i === para.length - 1}>{line}</StoryLine>
        )))}
      </Story>
    </RightPage>
  </Spread>
);

const App = () => (
  <>
    <GlobalStyle />
    <Frame>
      <MenuBar>
        <Logo>Id</Logo>
        <MenuList>
          {menus.map((m) => <PlainButton key={m}>{m}</PlainButton>)}
        </MenuList>
        <BarDivider $ml={13} />
        <AppBadge $ml={15}>Br</AppBadge>
        <AppBadge $ml={20}>St</AppBadge>
        <Zoom>74.3% <Down /></Zoom>
        <BarDivider $ml={12} />
        <PlainButton $ml={15} $gap={1} aria-label="视图选项"><WindowLayoutIcon /><Down /></PlainButton>
        <PlainButton $ml={20} $gap={1} aria-label="屏幕模式"><ScreenModeIcon /><Down /></PlainButton>
        <PlainButton $ml={21} $gap={1} aria-label="排列文档"><ArrangeIcon /><Down /></PlainButton>
        <Spacer />
        <BarDivider />
        <PlainButton $ml={10} $gap={9}>排版规则 <Down w={6} /></PlainButton>
        <BarDivider $ml={13} />
        <SearchBox>
          <Icon w={13} h={13} stroke="#333"><circle cx="8" cy="5" r="4" strokeWidth="1.5" /><path d="M5 8l-4 4" strokeWidth="2" /></Icon>
          <input type="search" aria-label="搜索" />
        </SearchBox>
        <WindowButtons>
          <WindowButton $w={27} aria-label="最小化"><Icon w={12} h={10} stroke="#eee"><path d="M1 7.5h10" strokeWidth="3" /></Icon></WindowButton>
          <WindowButton $w={27} aria-label="最大化"><Icon w={10} h={8} stroke="#eee"><rect x="1" y="1" width="8" height="6" strokeWidth="2" /></Icon></WindowButton>
          <WindowButton $w={47} aria-label="关闭"><Icon w={10} h={9} stroke="#eee"><path d="M1 .5l8 8M9 .5l-8 8" strokeWidth="2.5" /></Icon></WindowButton>
        </WindowButtons>
      </MenuBar>
      <Controls />
      <Body>
        <Tools />
        <Main>
          <TabStrip>
            <Tab>
              舌尖三明.indd @ 74%
              <button aria-label="关闭文档"><Icon w={7} h={7}><path d="M1 1l5 5M6 1L1 6" strokeWidth="1.5" /></Icon></button>
            </Tab>
          </TabStrip>
          <TopRuler>
            <Icon w={16} h={17} stroke="#8f8f8f"><path d="M0 6.5h16M5.5 0v17" strokeDasharray="1 1" /><path d="M15.5 0v17M0 16.5h16" /></Icon>
            <RulerTrack><HorizontalRuler /></RulerTrack>
            <Icon w={16} h={17} stroke="none" />
          </TopRuler>
          <Stage>
            <SideRuler><VerticalRuler /></SideRuler>
            <Pasteboard><Document /></Pasteboard>
            <VScroll><Up w={9} /><VThumb /><Down w={9} /></VScroll>
          </Stage>
          <StatusBar>
            <StatusItems>
              <Icon w={19} h={10} stroke="none"><rect width="19" height="10" rx="2" fill="#b4b4b4" /><circle cx="5" cy="5" r="2.5" stroke="#333" strokeWidth="2" strokeDasharray="2 .5" /><path d="M11 4h5M13 2l-2 2 2 2M12 7h5M15 5l2 2-2 2" stroke="#333" /></Icon>
              <StatusCell $ml={8} $w={14}><Icon w={14} h={12}><path d="M5 3H1v8h9V8" strokeWidth="1.5" /><path d="M4 8c0-3 2-4 5-4V1l4 4-4 3V6c-2 0-4 0-5 2z" fill={C} stroke="none" /></Icon></StatusCell>
              <StatusCell $ml={9} $w={21}><Icon w={8} h={9}><path d="M.5 0v9" /><path d="M8 0v9L2 4.5z" fill={C} stroke="none" /></Icon><Left /></StatusCell>
              <StatusCell $ml={9} $w={90}><input aria-label="页码" defaultValue="05" /><Down /></StatusCell>
              <StatusCell $ml={11} $w={21}><Right /><Icon w={8} h={9}><path d="M7.5 0v9" /><path d="M0 0v9l6-4.5z" fill={C} stroke="none" /></Icon></StatusCell>
              <StatusCell $ml={8} $w={17}><Icon w={17} h={13}><circle cx="6.5" cy="6.5" r="6" fill="#c4c4c4" stroke="none" /><path d="M4 3h3l3 3v5H4zM7 3v3h3" stroke="#333" /><path d="M14 10h2v2h-2z" fill={C} stroke="none" /></Icon></StatusCell>
              <StatusCell $ml={10} $w={111}>[基本] （工作） <Down /></StatusCell>
              <ErrorDot />
              <StatusCell $ml={0} $w={90} $small>5 个错误 <Down w={6} /></StatusCell>
            </StatusItems>
            <HScroll><Left /><HTrack><HThumb /></HTrack><Right /></HScroll>
            <StatusEnd>
              <Icon w={15} h={11}><rect x=".5" y=".5" width="14" height="10" fill="#333" /><path d="M7.5 0v11" /></Icon>
              <Icon w={10} h={10} stroke="#a0a0a0"><path d="M9.500 0v10M7.500 2v8M5.500 4v6M3.500 6v4M1.500 8v2" strokeDasharray="1 1" /></Icon>
            </StatusEnd>
          </StatusBar>
        </Main>
        <Dock>
          <DockHeader $side="flex-end"><Chevrons /></DockHeader>
          {panels.map((group, i) => (
            <PanelGroup key={i}>
              <GripBar />
              {group.map(([name, icon]) => (
                <PanelButton key={name}><PanelIcon>{icon}</PanelIcon>{name}</PanelButton>
              ))}
            </PanelGroup>
          ))}
        </Dock>
      </Body>
      <FloatBall />
    </Frame>
  </>
);

export default App
